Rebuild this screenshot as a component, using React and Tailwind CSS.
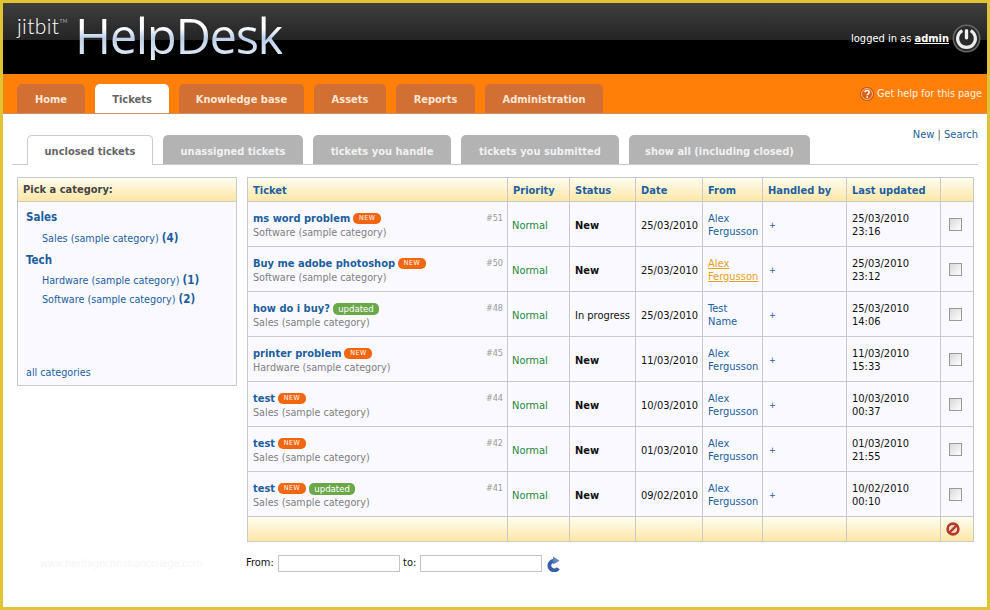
import React from 'react';

const font = 'font-["DejaVu_Sans_Condensed","DejaVu_Sans",sans-serif]';

const navTabs = ['Home', 'Tickets', 'Knowledge base', 'Assets', 'Reports', 'Administration'];
const navWidths = {
  Home: 'w-[68px]',
  Tickets: 'w-[74px]',
  'Knowledge base': 'w-[125px]',
  Assets: 'w-[72px]',
  Reports: 'w-[79px]',
  Administration: 'w-[118px]',
};

const subTabs = [
  ['unclosed tickets', 'w-[126px]'],
  ['unassigned tickets', 'w-[140px]'],
  ['tickets you handle', 'w-[138px]'],
  ['tickets you submitted', 'w-[158px]'],
  ['show all (including closed)', 'w-[181px]'],
];

const tickets = [
  { title: 'ms word problem', isNew: true, cat: 'Software (sample category)', id: '#51', status: 'New', date: '25/03/2010', from: ['Alex', 'Fergusson'], upd: ['25/03/2010', '23:16'] },
  { title: 'Buy me adobe photoshop', isNew: true, cat: 'Software (sample category)', id: '#50', status: 'New', date: '25/03/2010', from: ['Alex', 'Fergusson'], hover: true, upd: ['25/03/2010', '23:12'] },
  { title: 'how do i buy?', updated: true, cat: 'Sales (sample category)', id: '#48', status: 'In progress', date: '25/03/2010', from: ['Test', 'Name'], upd: ['25/03/2010', '14:06'] },
  { title: 'printer problem', isNew: true, cat: 'Hardware (sample category)', id: '#45', status: 'New', date: '11/03/2010', from: ['Alex', 'Fergusson'], upd: ['11/03/2010', '15:33'] },
  { title: 'test', isNew: true, cat: 'Sales (sample category)', id: '#44', status: 'New', date: '10/03/2010', from: ['Alex', 'Fergusson'], upd: ['10/03/2010', '00:37'] },
  { title: 'test', isNew: true, cat: 'Sales (sample category)', id: '#42', status: 'New', date: '01/03/2010', from: ['Alex', 'Fergusson'], upd: ['01/03/2010', '21:55'] },
  { title: 'test', isNew: true, updated: true, cat: 'Sales (sample category)', id: '#41', status: 'New', date: '09/02/2010', from: ['Alex', 'Fergusson'], upd: ['10/02/2010', '00:10'] },
];

const headers = [
  ['Ticket', 'w-[260px]'],
  ['Priority', 'w-[62px]'],
  ['Status', 'w-[66px]'],
  ['Date', 'w-[67px]'],
  ['From', 'w-[60px]'],
  ['Handled by', 'w-[84px]'],
  ['Last updated', 'w-[94px]'],
  ['', 'w-[33px]'],
];

function PowerIcon() {
  return (
    <svg width="29" height="29" viewBox="0 0 28 28">
      <circle cx="14" cy="14" r="13.5" fill="#666" />
      <circle cx="14" cy="14" r="12" fill="#2a2a2a" />
      <path d="M10 6.4a8.6 8.6 0 1 0 8 0" fill="none" stroke="#ececec" strokeWidth="3" />
      <rect x="12.4" y="5" width="3.2" height="10" rx="1.4" fill="#f4f4f4" />
    </svg>
  );
}

function HelpIcon() {
  return (
    <svg width="14" height="14" viewBox="0 0 14 14">
      <circle cx="7" cy="7" r="7" fill="#c9500f" />
      <circle cx="7" cy="7" r="5.5" fill="#d95f14" stroke="#fbc08a" strokeWidth="1" />
      <path d="M4.9 5.3C5 4.1 6 3.5 7.1 3.5c1.2 0 2.1.7 2.1 1.8 0 1.5-2 1.5-2 3" fill="none" stroke="#fff" strokeWidth="1.5" />
      <rect x="6.4" y="9.3" width="1.6" height="1.6" fill="#fff" />
    </svg>
  );
}

function RefreshIcon() {
  return (
    <svg width="13" height="16" viewBox="0 0 13 16">
      <path d="M11.2 12.2A4.8 4.8 0 1 1 6.8 4.8" fill="none" stroke="#3560a8" strokeWidth="3.8" />
      <path d="M6 0.5l6.5 4.2L6 8.5z" fill="#5c83c0" />
    </svg>
  );
}

function BanIcon() {
  return (
    <svg width="14" height="14" viewBox="0 0 14 14">
      <circle cx="7" cy="7" r="5.4" fill="#f6dcc8" stroke="#b53a2a" strokeWidth="2.6" />
      <path d="M3.2 10.8L10.8 3.2" stroke="#b53a2a" strokeWidth="2.4" />
    </svg>
  );
}

function NewBadge() {
  return (
    <span className="inline-flex items-center justify-center w-[28px] h-[11px] rounded-[5px] bg-[#f2660f] text-white text-[7px] leading-none tracking-[0.5px]">
      NEW
    </span>
  );
}

function UpdatedBadge() {
  return (
    <span className="inline-flex items-center justify-center w-[46px] h-[12px] rounded-[5px] bg-[#6aa84a] text-white text-[9.5px] leading-none">
      updated
    </span>
  );
}

function App() {
  return (
    <div className={`w-[990px] h-[610px] overflow-hidden border-[3px] border-[#e0c433] bg-white text-[11px] text-[#111] ${font}`}>
      {/* top banner */}
      <header className="h-[71px] flex items-center justify-between pl-[14px] pr-[6px] bg-[linear-gradient(#3f3f3f,#242424_52%,#000_52%)]">
        <div className="flex items-start">
          <span className="mt-[-3px] w-[60px] text-white text-[21px] font-light leading-none tracking-[0.4px] font-['Lato',sans-serif]">
            jitbit<sup className="text-[5px] align-super">TM</sup>
          </span>
          <span className="mt-[-7px] ml-[-2px] text-[49px] font-medium leading-none tracking-[-1.4px] font-['Open_Sans',sans-serif] text-transparent bg-clip-text bg-[linear-gradient(#fff_35%,#bcd0ea_55%,#e8eef7)]">
            HelpDesk
          </span>
        </div>
        <div className="flex items-center gap-[3px] text-white text-[11px]">
          <span className="pt-[2px]">
            logged in as <a className="font-bold underline">admin</a>
          </span>
          <PowerIcon />
        </div>
      </header>

      {/* main nav */}
      <nav className="h-[40px] flex items-end justify-between pl-[14px] pr-[5px] bg-[#ff7f09] border-b border-[#c9906a]">
        <div className="flex gap-[10px]">
          {navTabs.map((tab) =>
            tab === 'Tickets' ? (
              <a key={tab} className={`${navWidths[tab]} h-[29px] pt-[4px] flex items-center justify-center rounded-t-[5px] bg-white text-[#666] font-bold mb-[-1px]`}>
                {tab}
              </a>
            ) : (
              <a key={tab} className={`${navWidths[tab]} h-[29px] pt-[4px] flex items-center justify-center rounded-t-[5px] bg-[#d26f32] text-[#fbe6d6] font-bold`}>
                {tab}
              </a>
            ),
          )}
        </div>
        <div className="self-center flex items-center gap-[3px] pt-[2px] text-[10.7px] text-[#fff3e6]">
          <HelpIcon />
          Get help for this page
        </div>
      </nav>

      {/* sub tabs */}
      <div className="mx-[9px] mt-[15px] h-[36px] flex items-end justify-between border-b border-[#ccc]">
        <div className="flex gap-[10px] pl-[15px]">
          {subTabs.map(([label, w], i) =>
            i === 0 ? (
              <a key={label} className={`${w} h-[30px] pt-[4px] mb-[-1px] flex items-center justify-center rounded-t-[5px] border border-b-0 border-[#ccc] bg-white text-[#666] font-bold`}>
                {label}
              </a>
            ) : (
              <a key={label} className={`${w} h-[29px] pt-[5px] flex items-center justify-center rounded-t-[5px] bg-[#b3b3b3] text-[#f1f1f1] font-bold`}>
                {label}
              </a>
            ),
          )}
        </div>
        <div className="self-start mt-[-2px] pl-[1px] text-[#1d5f9e]">
          New <span className="text-[#555]">|</span> Search
        </div>
      </div>

      {/* body */}
      <div className="flex gap-[10px] pl-[14px] mt-[12px]">
        <aside className="w-[220px] h-[209px] flex flex-col border border-[#c9c9c9] bg-[#f9f9ff]">
          <div className="h-[24px] shrink-0 flex items-center pt-[2px] pl-[5px] border-b border-[#ccc] font-bold text-[#444] bg-[linear-gradient(#fffdf0,#fde6a4)]">
            Pick a category:
          </div>
          <div className="flex-1 flex flex-col pl-[8px] pb-[4px] text-[10.7px] text-[#1d5f9e]">
            <a className="mt-[7px] font-bold text-[11.5px] leading-[16px]">Sales</a>
            <a className="mt-[5px] ml-[16px] leading-[16px]">Sales (sample category) <b className="text-[11.5px]">(4)</b></a>
            <a className="mt-[5px] font-bold text-[11.5px] leading-[16px]">Tech</a>
            <a className="mt-[4px] ml-[16px] leading-[16px]">Hardware (sample category) <b className="text-[11.5px]">(1)</b></a>
            <a className="mt-[2px] ml-[16px] leading-[16px]">Software (sample category) <b className="text-[11.5px]">(2)</b></a>
            <a className="mt-auto leading-[16px]">all categories</a>
          </div>
        </aside>

        <main className="w-[727px]">
          <table className="w-full table-fixed border-collapse">
            <thead>
              <tr className="h-[24px] bg-[linear-gradient(#fffdf0,#fde6a4)]">
                {headers.map(([h, w], i) => (
                  <th key={i} className={`${w} border border-[#c9c9c9] pl-[5px] pt-[3px] text-left font-bold text-[#1d5f9e]`}>
                    {h}
                  </th>
                ))}
              </tr>
            </thead>
            <tbody>
              {tickets.map((t) => (
                <tr key={t.id} className="h-[45px] bg-[#f9f9ff]">
                  <td className="border border-[#c9c9c9] pl-[5px] pr-[4px] pt-[3px]">
                    <div className="flex justify-between">
                      <div className="leading-[14px]">
                        <div className="flex items-center gap-[3px]">
                          <a className="font-bold text-[#1d5f9e]">{t.title}</a>
                          {t.isNew && <NewBadge />}
                          {t.updated && <UpdatedBadge />}
                        </div>
                        <div className="text-[10.7px] text-[#808080]">{t.cat}</div>
                      </div>
                      <span className="text-[9px] leading-[12px] text-[#999]">{t.id}</span>
                    </div>
                  </td>
                  <td className="border border-[#c9c9c9] pl-[4px] pt-[5px] text-[#1f8a3a]">Normal</td>
                  <td className={`border border-[#c9c9c9] pl-[5px] pt-[5px] ${t.status === 'New' ? 'font-bold' : ''}`}>{t.status}</td>
                  <td className="border border-[#c9c9c9] pl-[5px] pt-[5px]">{t.date}</td>
                  <td className={`border border-[#c9c9c9] pl-[5px] pt-[2px] leading-[13px] ${t.hover ? 'text-[#e8a020] underline' : 'text-[#1d5f9e]'}`}>
                    {t.from[0]}<br />{t.from[1]}
                  </td>
                  <td className="border border-[#c9c9c9] pl-[6px] pt-[4px] text-[9px] text-[#1d5f9e]">+</td>
                  <td className="border border-[#c9c9c9] pl-[5px] pt-[2px] leading-[13px]">
                    {t.upd[0]}<br />{t.upd[1]}
                  </td>
                  <td className="border border-[#c9c9c9] pl-[8px] pt-[1px]">
                    <input type="checkbox" className="appearance-none block w-[13px] h-[13px] border border-[#999] bg-[linear-gradient(135deg,#d8d8d8,#fff)]" />
                  </td>
                </tr>
              ))}
              <tr className="h-[25px] bg-[linear-gradient(#fffdf0,#fde6a4)]">
                {[0, 1, 2, 3, 4, 5, 6].map((i) => (
                  <td key={i} className="border border-[#c9c9c9]" />
                ))}
                <td className="border border-[#c9c9c9] pl-[5px]">
                  <BanIcon />
                </td>
              </tr>
            </tbody>
          </table>
        </main>
      </div>

      {/* date filter */}
      <div className="flex items-center mt-[13px] pl-[37px]">
        <span className="w-[206px] text-[#f5f5f5] text-[10.5px]">www.heritagechristiancollege.com</span>
        <span className="w-[32px]">From:</span>
        <input className="w-[122px] h-[17px] border border-[#c4c4c4] bg-white" />
        <span className="ml-[3px] w-[17px]">to:</span>
        <input className="w-[122px] h-[17px] border border-[#c4c4c4] bg-white" />
        <span className="ml-[5px]"><RefreshIcon /></span>
      </div>
    </div>
  );
}

export default App;
